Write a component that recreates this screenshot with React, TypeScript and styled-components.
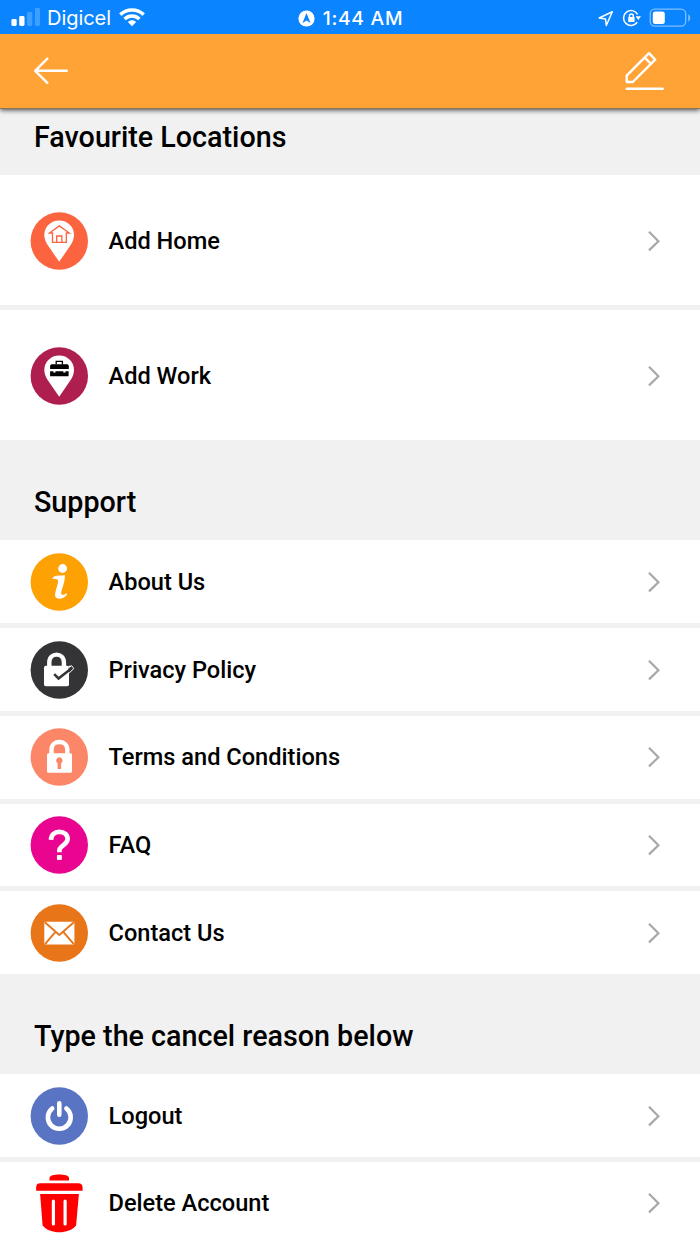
import React from "react";
import styled, { createGlobalStyle } from "styled-components";

const GlobalStyle = createGlobalStyle`
  * { box-sizing: border-box; }
  body { margin: 0; background: #f1f1f1; font-family: Roboto, sans-serif; color: #000; }
  svg { display: block; flex: none; }
`;

const Screen = styled.main`
  width: 700px;
  height: 1244px;
  overflow: hidden;
  display: flex;
  flex-direction: column;
`;

const StatusBar = styled.div`
  height: 34px;
  flex: none;
  display: grid;
  grid-template-columns: 1fr auto 1fr;
  align-items: center;
  padding: 2px 9px 0 11px;
  background: #0a84ff;
  color: #fff;
  font-family: Inter, sans-serif;
  font-size: 19.3px;
  z-index: 2;
`;

const StatusGroup = styled.div<{ $end?: boolean }>`
  display: flex;
  align-items: center;
  justify-content: ${(p) => (p.$end ? "flex-end" : "flex-start")};
  gap: 8px;
`;

const Carrier = styled.span`
  font-size: 20px;
  line-height: 24px;
  letter-spacing: -0.05px;
  margin-left: -1px;
`;

const Clock = styled.span`
  font-weight: 500;
  line-height: 24px;
  letter-spacing: 0.7px;
  margin-right: 1px;
`;

const NavBar = styled.header`
  height: 75px;
  flex: none;
  display: flex;
  align-items: center;
  justify-content: space-between;
  padding: 0 35px 0 33px;
  background: #ffa336;
  border-bottom: 1px solid #8a7558;
  box-shadow: 0 1px 5px rgba(0, 0, 0, 0.75);
  z-index: 1;
`;

const BarButton = styled.button`
  padding: 0;
  border: 0;
  background: none;
`;

const SectionTitle = styled.h2<{ $first?: boolean }>`
  height: ${(p) => (p.$first ? 66.4 : 99.8)}px;
  flex: none;
  margin: 0;
  padding: ${(p) => (p.$first ? 11 : 44.8)}px 34px 0;
  font-size: 28.7px;
  line-height: 34px;
  font-weight: 500;
`;

const List = styled.div`
  flex: none;
  display: flex;
  flex-direction: column;
  gap: 5px;
`;

const RowBox = styled.div<{ $tall?: boolean }>`
  height: ${(p) => (p.$tall ? 130 : 82.8)}px;
  display: flex;
  align-items: center;
  padding: 0.6px 39px 0 29px;
  background: #fff;
`;

const Label = styled.span`
  flex: 1;
  padding-left: 19.5px;
  font-size: 23.6px;
  line-height: 30px;
  font-weight: 500;
`;

const Badge = ({ color, children }: { color?: string; children: React.ReactNode }) => (
  <svg width="60" height="60" viewBox="0 0 60 60" fill="none">
    {color && <circle cx="30.3" cy="30" r="28.7" fill={color} />}
    {children}
  </svg>
);

const Pin = () => (
  <path d="M30.2 9.5C21.8 9.5 15.3 15.8 15.3 24c0 3.4 1.3 6.7 3.2 9.8L30.2 50.8l11.6-17c2-3.1 3.2-6.4 3.2-9.8C45 15.8 38.6 9.5 30.2 9.5Z" fill="#fff" />
);

const HomeIcon = () => (
  <Badge color="#fc6440">
    <Pin />
    <path d="M20.5 22 30.3 14.9l10 7.1h-3v9.4H23.5V22Z" stroke="#fc6440" strokeWidth="1.3" />
    <path d="M27.7 31v-6h5.2v6" stroke="#fc6440" strokeWidth="1.3" />
  </Badge>
);

const WorkIcon = () => (
  <Badge color="#ae1e4f">
    <Pin />
    <path d="M27.2 18.5v-3.1h6.2v3.1" stroke="#000" strokeWidth="1.3" />
    <path d="M22.3 18.2h16.2l1.3 1.2v3.7H21.1v-3.7ZM21.1 25.3h3.2v1.1h2.2v-1.1h7.8v1.1h2.2v-1.1h3.1v5H21.1Z" fill="#000" />
  </Badge>
);

const InfoIcon = () => (
  <Badge color="#fea103">
    <circle cx="33.6" cy="16.5" r="4.4" fill="#fff" />
    <path d="M23.1 26.8c1.2-2.3 3.4-3.2 6.8-3.2 2.1 0 4.1 0 5.9-.5.4 3.5-.5 6.5-1.5 10.1-.9 3.2-2.2 6.3-2.1 8 0 2.2 2.5 2 5 .3.8-.5 1.2 0 .7.8-1.5 2.8-4.4 4.5-7.6 4.5-3.5 0-4.6-2.1-4.1-5.2.4-3.2 1.9-7.2 2.6-10.7.6-3.4-.3-4.1-2.6-4Z" fill="#fff" />
  </Badge>
);

const PrivacyIcon = () => (
  <Badge color="#343436">
    <path d="M20.3 28v-5.5c0-10.5 14.6-10.5 14.6 0V28" stroke="#fff" strokeWidth="4.4" />
    <rect x="15" y="25.7" width="25" height="20.5" rx="1.8" fill="#fff" />
    <path d="m25.3 33.8 4 4.4 13.4-11.1" stroke="#fff" strokeWidth="4.9" />
    <path d="m39.3 28 3.3-2.3 2.2 2.9-4.7 4.5" fill="#343436" stroke="#fff" strokeWidth="1" />
    <path d="m25.2 34.2 4.3 4.3 12.5-9.8" stroke="#343436" strokeWidth="2.5" />
  </Badge>
);

const TermsIcon = () => (
  <Badge color="#fb8768">
    <path d="M22.5 28v-5.3c0-10.2 15.8-10.2 15.8 0V28" stroke="#fff" strokeWidth="4.4" />
    <rect x="18" y="26.3" width="25" height="19.5" rx="1.5" fill="#fff" />
    <path d="M28.6 36.2a3.2 3.2 0 1 1 3.5 0V42h-3.5Z" fill="#fb8768" />
  </Badge>
);

const FaqIcon = () => (
  <Badge color="#e9058f">
    <path d="M22 24.9c.2-5.1 3.5-8 8.3-8 5 0 8.3 2.9 8.3 7.2 0 6-8.2 6.4-8.2 11.2v2" stroke="#fff" strokeWidth="4.7" />
    <rect x="27.9" y="39.9" width="5" height="5" rx="1" fill="#fff" />
  </Badge>
);

const MailIcon = () => (
  <Badge color="#e87518">
    <rect x="15.3" y="18.7" width="30.1" height="22.8" rx="1" fill="#fff" />
    <path d="m15.8 19.2 14.5 12.7 14.6-12.7M16 41.2l10-11.8M44.8 41.2 34.7 29.4" stroke="#e87518" strokeWidth="1.9" />
  </Badge>
);

const PowerIcon = () => (
  <Badge color="#5a74c4">
    <path d="M30.3 17.4v11.4M23.2 22.5a11.4 11.4 0 1 0 14.2 0" stroke="#fff" strokeWidth="4.6" strokeLinecap="round" />
  </Badge>
);

const TrashIcon = () => (
  <Badge>
    <path d="M20.5 7.5V5c0-2.3 4.7-3.4 9.7-3.4S40 2.7 40 5v2.5ZM7.1 17.8v-3.4c0-2.5 1.5-4.1 4.2-4.1h38c2.7 0 4.3 1.6 4.3 4.1v3.4Z" fill="#f00" />
    <path fillRule="evenodd" d="M11.1 21.1h38.8l-2.8 31.4c-3.6 4.5-10.2 6.8-16.8 6.8s-13.1-2.3-16.7-6.8ZM22.8 28.2v22.7a1.6 1.6 0 0 0 3.2 0V28.2a1.6 1.6 0 0 0-3.2 0ZM34.5 28.2v22.7a1.6 1.6 0 0 0 3.2 0V28.2a1.6 1.6 0 0 0-3.2 0Z" fill="#f00" />
  </Badge>
);

const Chevron = () => (
  <svg width="14" height="22" viewBox="0 0 14 22" fill="none" stroke="#a8a8a8" strokeWidth="2.2">
    <path d="m2 1.8 9.4 9.4L2 20.4" />
  </svg>
);

const Row = ({ icon, label, tall }: { icon: React.ReactNode; label: string; tall?: boolean }) => (
  <RowBox $tall={tall}>
    {icon}
    <Label>{label}</Label>
    <Chevron />
  </RowBox>
);

export default function App() {
  return (
    <Screen>
      <GlobalStyle />
      <StatusBar>
        <StatusGroup>
          <svg width="29" height="20" viewBox="0 0 29 20" fill="#fff">
            <rect x="0.4" y="11" width="5.3" height="7" rx="1.4" />
            <rect x="8.2" y="8" width="5.3" height="10" rx="1.4" />
            <rect x="16" y="4" width="5.3" height="14" rx="1.4" opacity=".22" />
            <rect x="24" y="0" width="5" height="18" rx="1.4" opacity=".22" />
          </svg>
          <Carrier>Digicel</Carrier>
          <svg width="26" height="20" viewBox="0 0 26 20" fill="none" stroke="#fff" strokeWidth="3.5">
            <path d="M1.3 6.6c6.6-6.2 16.8-6.2 23.4 0M5.6 11c4.2-4 10.6-4 14.8 0" />
            <path d="M8.9 14c2.3-2.2 5.9-2.2 8.2 0L13 18.3Z" fill="#fff" stroke="none" />
          </svg>
        </StatusGroup>
        <StatusGroup>
          <svg width="17" height="17" viewBox="0 0 17 17">
            <circle cx="8.5" cy="8.5" r="8.1" fill="#fff" />
            <path d="m8.5 3 4 10-4-2.4-4 2.4Z" fill="#0a84ff" />
          </svg>
          <Clock>1:44 AM</Clock>
        </StatusGroup>
        <StatusGroup $end>
          <svg width="16" height="17" viewBox="0 0 16 17" fill="none" stroke="#fff" strokeWidth="1.5" strokeLinejoin="round">
            <path d="M14.3 1.7 1.2 8l6.3 1 .8 6.5Z" />
          </svg>
          <svg width="19" height="18" viewBox="0 0 19 18" fill="none" stroke="#fff" strokeWidth="1.5">
            <path d="M15.6 5.3A7.5 7.5 0 1 0 15.2 13.3M7.5 8.4V6.9c0-2.7 3.8-2.7 3.8 0v1.5" />
            <rect x="6.2" y="8" width="6.4" height="5" rx=".7" fill="#fff" stroke="none" />
            <path d="M13.6 7.3h5.4l-2.7 3.7Z" fill="#fff" stroke="none" />
          </svg>
          <svg width="42" height="20" viewBox="0 0 42 20" fill="none">
            <rect x="1.2" y="1.2" width="35.5" height="17" rx="4.7" stroke="#fff" strokeOpacity=".48" strokeWidth="1.3" />
            <rect x="3.8" y="3.5" width="12" height="12.4" rx="2.5" fill="#fff" />
            <path d="M39.2 6.5c2.7 1.3 2.7 5.7 0 7Z" fill="#fff" fillOpacity=".48" />
          </svg>
        </StatusGroup>
      </StatusBar>
      <NavBar>
        <BarButton aria-label="Back">
          <svg width="36" height="28" viewBox="0 0 36 28" fill="none" stroke="#fff" strokeWidth="2.4" strokeLinecap="round" strokeLinejoin="round">
            <path d="M33.8 13.8H2.2M14.3 1.7 2.2 13.8l12.1 12" />
          </svg>
        </BarButton>
        <BarButton aria-label="Edit">
          <svg width="41" height="40" viewBox="0 0 41 40" fill="none" stroke="#fff" strokeWidth="2.4" strokeLinecap="round" strokeLinejoin="round">
            <path d="M2.7 24.6 25 2.2l6.2 6.4L8.8 31H2.7ZM20.7 6.7l6.3 6.1M2.7 37.7h36" />
          </svg>
        </BarButton>
      </NavBar>
      <SectionTitle $first>Favourite Locations</SectionTitle>
      <List>
        <Row tall icon={<HomeIcon />} label="Add Home" />
        <Row tall icon={<WorkIcon />} label="Add Work" />
      </List>
      <SectionTitle>Support</SectionTitle>
      <List>
        <Row icon={<InfoIcon />} label="About Us" />
        <Row icon={<PrivacyIcon />} label="Privacy Policy" />
        <Row icon={<TermsIcon />} label="Terms and Conditions" />
        <Row icon={<FaqIcon />} label="FAQ" />
        <Row icon={<MailIcon />} label="Contact Us" />
      </List>
      <SectionTitle>Type the cancel reason below</SectionTitle>
      <List>
        <Row icon={<PowerIcon />} label="Logout" />
        <Row icon={<TrashIcon />} label="Delete Account" />
      </List>
    </Screen>
  );
}
